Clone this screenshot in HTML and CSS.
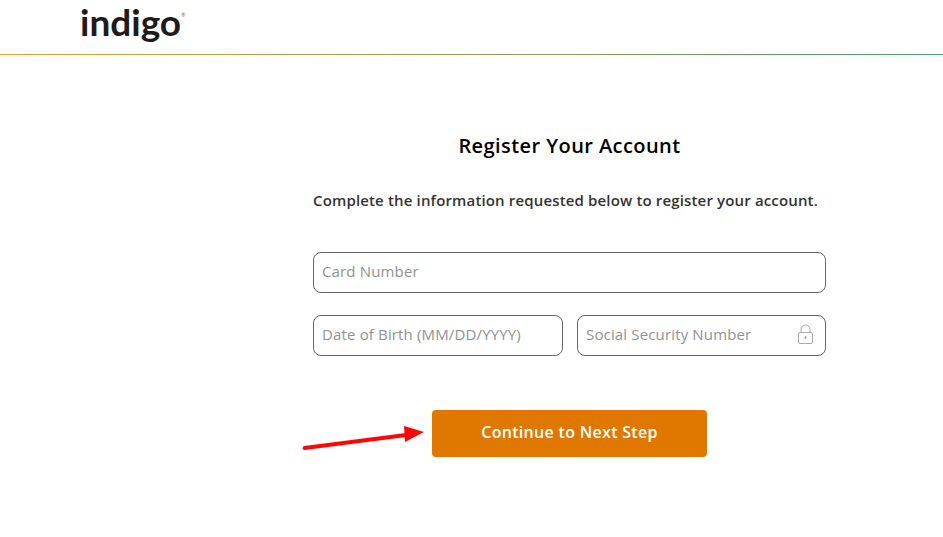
FILE: index.html
```html
<!DOCTYPE html>
<html>
<head>
    <title>Register Your Account</title>
    <link rel="stylesheet" href="styles.css">
</head>
<body>
    <header class="site-header">
        <div class="logo">indigo<span class="logo-mark">®</span></div>
    </header>
    <main class="register">
        <h1 class="register-title">Register Your Account</h1>
        <p class="register-intro">Complete the information requested below to register your account.</p>
        <form class="register-form">
            <div class="field">
                <input class="field-input" type="text" placeholder="Card Number">
            </div>
            <div class="field-row">
                <div class="field field-dob">
                    <input class="field-input" type="text" placeholder="Date of Birth (MM/DD/YYYY)">
                </div>
                <div class="field field-ssn">
                    <input class="field-input" type="text" placeholder="Social Security Number">
                    <svg class="lock-icon" width="17" height="21" viewBox="0 0 17 21" fill="none" stroke="#a9a9a9" stroke-width="1">
                        <rect x="1.5" y="8.5" width="14" height="11" rx="1.5"/>
                        <path d="M4 8.5V5.5a4.5 4.5 0 0 1 9 0v3"/>
                        <path d="M8.5 13v2" stroke-width="1.5"/>
                        <circle cx="8.5" cy="13" r="1" fill="#a9a9a9" stroke="none"/>
                    </svg>
                </div>
            </div>
            <div class="form-actions">
                <button class="next-btn" type="button">Continue to Next Step</button>
                <svg class="arrow" width="130" height="30" viewBox="0 0 130 30">
                    <path d="M2.5 24L104 11" stroke="#ff0505" stroke-width="3.8" stroke-linecap="round"/>
                    <path d="M102 2L122 8L103 18Z" fill="#ff0505"/>
                </svg>
            </div>
        </form>
    </main>
</body>
</html>
```

FILE: styles.css
```css
body {
    margin: 0;
    background-color: #ffffff;
    font-family: "Open Sans", "Liberation Sans", sans-serif;
}

.site-header {
    height: 54px;
    padding-left: 80px;
    border-bottom: 1px solid;
    border-image: linear-gradient(to right, #e0a030, #4aa070) 1;
}

.logo {
    display: inline-flex;
    font-family: "Lato", sans-serif;
    font-size: 37px;
    font-weight: 700;
    line-height: 44px;
    color: #1f1b1c;
}

.logo-mark {
    font-size: 5px;
    line-height: 30px;
    font-weight: 400;
    color: #666666;
}

.register {
    width: 513px;
    margin-left: 313px;
}

.register-title {
    margin: 0;
    padding-top: 77px;
    font-size: 20px;
    line-height: 28px;
    font-weight: 600;
    letter-spacing: 0.43px;
    text-align: center;
    color: #000000;
}

.register-intro {
    margin: 0;
    padding-top: 30px;
    font-size: 15px;
    line-height: 20px;
    font-weight: 600;
    letter-spacing: 0.15px;
    color: #333333;
}

.register-form {
    padding-top: 42px;
}

.field {
    position: relative;
    display: flex;
}

.field-row {
    display: flex;
    gap: 14px;
    margin-top: 22px;
}

.field-dob {
    width: 250px;
}

.field-ssn {
    width: 249px;
}

.field-input {
    width: 100%;
    height: 41px;
    box-sizing: border-box;
    padding: 0 8px 4px;
    border: 1px solid #666666;
    border-radius: 8px;
    font-family: inherit;
    font-size: 15px;
    letter-spacing: 0.15px;
    color: #333333;
}

.field-input::placeholder {
    color: #919191;
    opacity: 1;
}

.lock-icon {
    position: absolute;
    right: 12px;
    top: 9px;
}

.form-actions {
    position: relative;
    display: flex;
    justify-content: center;
    margin-top: 54px;
}

.next-btn {
    width: 275px;
    height: 47px;
    padding: 0 0 3px;
    border: none;
    border-radius: 4px;
    background-color: #e07800;
    color: #ffffff;
    font-family: inherit;
    font-size: 16px;
    font-weight: 600;
    letter-spacing: 0.3px;
    cursor: pointer;
}

.arrow {
    position: absolute;
    left: -11px;
    top: 14px;
}
```
